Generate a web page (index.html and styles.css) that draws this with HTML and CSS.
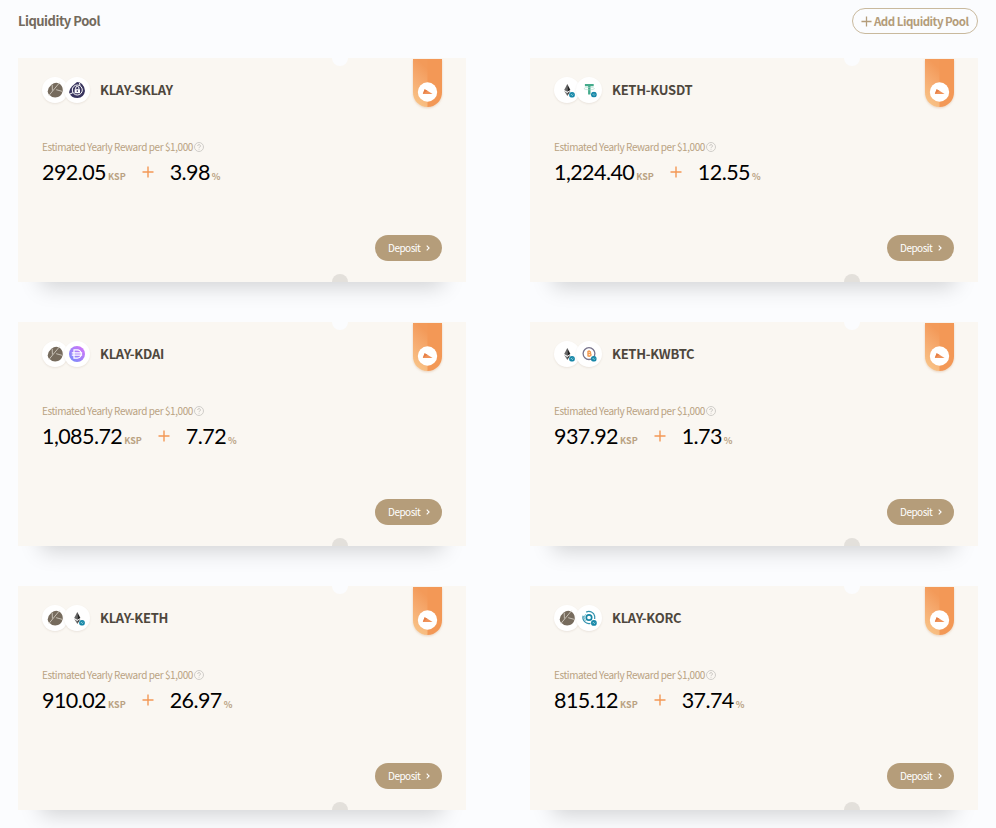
FILE: index.html
```
<!DOCTYPE html>
<html lang="en">
<head>
<meta charset="utf-8">
<title>Liquidity Pool</title>
<link rel="stylesheet" href="styles.css">
</head>

<body>
<!-- icons -->
<svg class="defs" width="0" height="0">
	<defs>
		<linearGradient id="g-dai" x1="0" y1="1" x2="1" y2="0">
			<stop offset="0" stop-color="#6f8dfb"/>
			<stop offset="1" stop-color="#dc74f8"/>
		</linearGradient>
		<linearGradient id="g-rib" x1="0.3" y1="0" x2="0" y2="1">
			<stop offset="0" stop-color="#f39a59"/>
			<stop offset="0.4" stop-color="#f6ab70"/>
			<stop offset="1" stop-color="#f9c98c"/>
		</linearGradient>
	</defs>
	<symbol id="bridge" viewBox="0 0 6 6">
		<circle cx="3" cy="3" r="2.9" fill="#1787a8"/>
		<path d="M1.8 3.3 3 2M3 4.1 4.2 2.8" stroke="#b9e4e6" stroke-width=".8"/>
	</symbol>
	<symbol id="klay" viewBox="0 0 16 16">
		<path d="M4.4 2.8Q8-.4 11.6 1.2 16.2 3.4 15.7 9 14.4 15.4 8.2 15.5 4.4 15.2 1.8 12.4-1.2 7.8 4.4 2.8Z" fill="#766b5d"/>
		<path d="M12.6.6 2 13.4M9.2 7.7 15 9.3M5.2 2.8 5.4 8.6" fill="none" stroke="#cfc9c0" stroke-width=".9"/>
	</symbol>
	<symbol id="sklay" viewBox="0 0 16 16">
		<path d="M8 0Q11 0 13 2Q16 5 16 9Q15 15.5 8.5 16Q2 16 .2 10.5Q-.2 8 3 4.3Z" fill="#38345e"/>
		<circle cx="8.3" cy="8" r="5" fill="none" stroke="#fff" stroke-width="1"/>
		<path d="M1 12 4 10.6M10.5 1 11 3.7" stroke="#fff" stroke-width="1"/>
		<path d="M5.6 7.2h5.4v4H5.6z" fill="#fff"/>
		<path d="M6.7 7.2V6a1.6 1.6 0 0 1 3.2 0v1.2" fill="none" stroke="#fff" stroke-width="1"/>
		<path d="M8.3 8.2v1.7" stroke="#38345e" stroke-width="1.1"/>
	</symbol>
	<symbol id="keth" viewBox="0 0 16 16">
		<path d="M8.3 2 5.2 8 8.3 9.8z" fill="#666"/>
		<path d="M8.3 2 11.4 8 8.3 9.8z" fill="#222"/>
		<path d="M5.2 9 8.3 10.9V14z" fill="#777"/>
		<path d="M8.3 10.9 11.4 9 8.3 14z" fill="#2b2b2b"/>
		<use href="#bridge" x="10" y="9.8" width="6" height="6"/>
	</symbol>
	<symbol id="kusdt" viewBox="0 0 16 16">
		<path d="M3.9 2h8.8v2.3H9.5V12.6H7.1V4.3H3.9z" fill="#45ab8c"/>
		<ellipse cx="8.2" cy="6.6" rx="5.3" ry="1.2" fill="none" stroke="#a9d8c9" stroke-width=".6"/>
		<use href="#bridge" x="9.9" y="9.6" width="6" height="6"/>
	</symbol>
	<symbol id="kdai" viewBox="0 0 16 16">
		<circle cx="8" cy="8" r="8" fill="url(#g-dai)"/>
		<path d="M5 3.9h3.2a4.1 4.1 0 0 1 0 8.2H5zM2.8 6.8h10.4M2.8 9.2h10.4" fill="none" stroke="#fff" stroke-width="1.2"/>
	</symbol>
	<symbol id="kwbtc" viewBox="0 0 16 16">
		<circle cx="8" cy="7.6" r="5.9" fill="none" stroke="#77738c" stroke-width="1.3"/>
		<path d="M6.5 5.4h2a1 1 0 0 1 0 2.1H6.7h2.1a1.2 1.2 0 0 1 0 2.4H6.3M7 5v5.2M8.1 4.2v1.2M8.1 9.8v1.2" fill="none" stroke="#f39a50" stroke-width="1.4"/>
		<use href="#bridge" x="9.8" y="9.8" width="6" height="6"/>
	</symbol>
	<symbol id="korc" viewBox="0 0 16 16">
		<circle cx="8" cy="7.5" r="2.7" fill="none" stroke="#1786a5" stroke-width="1.7"/>
		<path d="M5.2 2.1A6 6 0 0 1 13.7 6.2V9M2.2 5.8A6 6 0 0 0 9.4 13.4" fill="none" stroke="#3292ae" stroke-width="1.2"/>
		<path d="M4.8 4.2A4.6 4.6 0 0 0 4.8 10.8" fill="none" stroke="#58adc0" stroke-width=".8"/>
		<use href="#bridge" x="9.9" y="9.9" width="6" height="6"/>
	</symbol>
	<symbol id="ribbon" viewBox="0 0 29 48">
		<path d="M0 0h15v48h-.5A14.5 14.5 0 0 1 0 33.5z" fill="url(#g-rib)"/>
		<path d="M14.5 0H29v33.5A14.5 14.5 0 0 1 14.5 48z" fill="#f39856"/>
		<circle cx="14.5" cy="33" r="9.7" fill="#fff"/>
		<path d="M11.6 30.2 14.4 31.8 19.6 35H9.8z" fill="#f0935a"/>
		<path d="M11.6 30.2 14.4 31.8 9.8 35z" fill="#e57f46"/>
	</symbol>
	<symbol id="help" viewBox="0 0 10 10">
		<circle cx="5" cy="5" r="4.5" fill="none" stroke="#cfcdc9"/>
		<path d="M3.7 4a1.35 1.35 0 1 1 2 1.1Q5 5.4 5 6M5 6.8v.8" fill="none" stroke="#bdbab6" stroke-width=".8"/>
	</symbol>
	<symbol id="plus" viewBox="0 0 12 12">
		<path d="M6 .5v11M.5 6h11" stroke="currentColor" stroke-width="1.4"/>
	</symbol>
	<symbol id="arrow" viewBox="0 0 4 6">
		<path d="M.7.6 3.1 3 .7 5.4" fill="none" stroke="#fff" stroke-width="1.1"/>
	</symbol>
</svg>

<div class="wrap">
	<div class="head">
		<h2>Liquidity Pool</h2>
		<a href="javascript:;" class="add"><svg><use href="#plus"/></svg><span>Add Liquidity Pool</span></a>
	</div>
	<ul class="list">
		<li class="card">
			<div class="top">
				<span class="coin"><svg><use href="#klay"/></svg></span><span class="coin"><svg><use href="#sklay"/></svg></span>
				<h3>KLAY-SKLAY</h3>
				<svg class="ribbon"><use href="#ribbon"/></svg>
			</div>
			<p class="tit">Estimated Yearly Reward per $1,000<svg><use href="#help"/></svg></p>
			<p class="num"><b>292.05</b><i>KSP</i><svg><use href="#plus"/></svg><b>3.98</b><i>%</i></p>
			<a href="javascript:;" class="btn"><span>Deposit</span><svg><use href="#arrow"/></svg></a>
		</li>
		<li class="card">
			<div class="top">
				<span class="coin"><svg><use href="#keth"/></svg></span><span class="coin"><svg><use href="#kusdt"/></svg></span>
				<h3>KETH-KUSDT</h3>
				<svg class="ribbon"><use href="#ribbon"/></svg>
			</div>
			<p class="tit">Estimated Yearly Reward per $1,000<svg><use href="#help"/></svg></p>
			<p class="num"><b>1,224.40</b><i>KSP</i><svg><use href="#plus"/></svg><b>12.55</b><i>%</i></p>
			<a href="javascript:;" class="btn"><span>Deposit</span><svg><use href="#arrow"/></svg></a>
		</li>
		<li class="card">
			<div class="top">
				<span class="coin"><svg><use href="#klay"/></svg></span><span class="coin"><svg><use href="#kdai"/></svg></span>
				<h3>KLAY-KDAI</h3>
				<svg class="ribbon"><use href="#ribbon"/></svg>
			</div>
			<p class="tit">Estimated Yearly Reward per $1,000<svg><use href="#help"/></svg></p>
			<p class="num"><b>1,085.72</b><i>KSP</i><svg><use href="#plus"/></svg><b>7.72</b><i>%</i></p>
			<a href="javascript:;" class="btn"><span>Deposit</span><svg><use href="#arrow"/></svg></a>
		</li>
		<li class="card">
			<div class="top">
				<span class="coin"><svg><use href="#keth"/></svg></span><span class="coin"><svg><use href="#kwbtc"/></svg></span>
				<h3>KETH-KWBTC</h3>
				<svg class="ribbon"><use href="#ribbon"/></svg>
			</div>
			<p class="tit">Estimated Yearly Reward per $1,000<svg><use href="#help"/></svg></p>
			<p class="num"><b>937.92</b><i>KSP</i><svg><use href="#plus"/></svg><b>1.73</b><i>%</i></p>
			<a href="javascript:;" class="btn"><span>Deposit</span><svg><use href="#arrow"/></svg></a>
		</li>
		<li class="card">
			<div class="top">
				<span class="coin"><svg><use href="#klay"/></svg></span><span class="coin"><svg><use href="#keth"/></svg></span>
				<h3>KLAY-KETH</h3>
				<svg class="ribbon"><use href="#ribbon"/></svg>
			</div>
			<p class="tit">Estimated Yearly Reward per $1,000<svg><use href="#help"/></svg></p>
			<p class="num"><b>910.02</b><i>KSP</i><svg><use href="#plus"/></svg><b>26.97</b><i>%</i></p>
			<a href="javascript:;" class="btn"><span>Deposit</span><svg><use href="#arrow"/></svg></a>
		</li>
		<li class="card">
			<div class="top">
				<span class="coin"><svg><use href="#klay"/></svg></span><span class="coin"><svg><use href="#korc"/></svg></span>
				<h3>KLAY-KORC</h3>
				<svg class="ribbon"><use href="#ribbon"/></svg>
			</div>
			<p class="tit">Estimated Yearly Reward per $1,000<svg><use href="#help"/></svg></p>
			<p class="num"><b>815.12</b><i>KSP</i><svg><use href="#plus"/></svg><b>37.74</b><i>%</i></p>
			<a href="javascript:;" class="btn"><span>Deposit</span><svg><use href="#arrow"/></svg></a>
		</li>
	</ul>
</div>
</body>
</html>
```
FILE: styles.css
```
*{ margin:0; padding:0; list-style:none; text-decoration:none; box-sizing:border-box;}
body{ background:#fbfcfe; font-family:"Noto Sans CJK KR",sans-serif; height:828px; overflow:hidden;}
svg{ display:block; flex:none;}
.defs{ position:absolute;}
.wrap{ width:960px; margin:0 auto; padding-top:8px;}

.head{ height:26px; display:flex; justify-content:space-between; align-items:center;}
.head h2{ font-size:13px; line-height:26px; font-weight:700; color:#736a5d; letter-spacing:-0.5px;}
.add{ width:126px; height:26px; border:1px solid #c9b99d; border-radius:13px; display:flex; align-items:center; padding-left:8px; color:#b49c7a; font-size:11.5px; line-height:24px; font-weight:700; letter-spacing:-0.5px; white-space:nowrap;}
.add svg{ width:11px; height:11px; margin-right:2px;}

.list{ display:grid; grid-template-columns:448px 448px; justify-content:space-between; row-gap:40px; margin-top:24px;}
.card{ height:224px; background:#faf7f2; padding:0 24px; position:relative; display:flex; flex-direction:column; box-shadow:0 28px 20px -23px rgba(0,0,0,.17);}
/* punched holes */
.card:before,.card:after{ content:""; width:16px; height:8px; position:absolute; left:314px;}
.card:before{ top:0; background:#fbfcfe; border-radius:0 0 8px 8px;}
.card:after{ bottom:0; background:#e3e0db; border-radius:8px 8px 0 0;}

.top{ height:64px; display:flex; align-items:center;}
.coin{ width:26px; height:26px; border-radius:50%; background:#fff; box-shadow:0 1px 2px rgba(120,100,70,.12); display:flex; align-items:center; justify-content:center;}
.coin + .coin{ margin-left:-4px;}
.coin svg{ width:16px; height:16px;}
.top h3{ font-size:13px; line-height:20px; font-weight:700; color:#4e473d; margin-left:10px; flex:1; letter-spacing:-0.27px;}
.ribbon{ width:29px; height:48px; align-self:flex-start; margin-top:1px; filter:drop-shadow(0 1px 1px rgba(200,130,70,.3));}

.tit{ display:flex; align-items:center; margin-top:17px; height:16px; font-size:10px; line-height:16px; color:#b9a282; letter-spacing:-0.42px; font-weight:400;}
.tit svg{ width:10px; height:10px; margin-left:1px;}
.num{ display:flex; align-items:baseline; height:32px; line-height:32px; margin-top:1px;}
.num b{ font-family:Lato,sans-serif; font-size:21.5px; font-weight:400; letter-spacing:-0.57px; color:#000;}
.num i{ font-size:9px; font-style:normal; font-weight:700; color:#b9a282; margin-left:2px;}
.num svg{ width:12px; height:12px; color:#f39856; margin:0 16px; align-self:center;}

.btn{ width:67px; height:26px; border-radius:13px; background:#b59d7a; color:#fff; font-size:10px; line-height:26px; letter-spacing:-0.5px; display:flex; align-items:center; padding-left:13px; margin:auto 0 21px auto;}
.btn svg{ width:4px; height:6px; margin-left:6px;}
```
